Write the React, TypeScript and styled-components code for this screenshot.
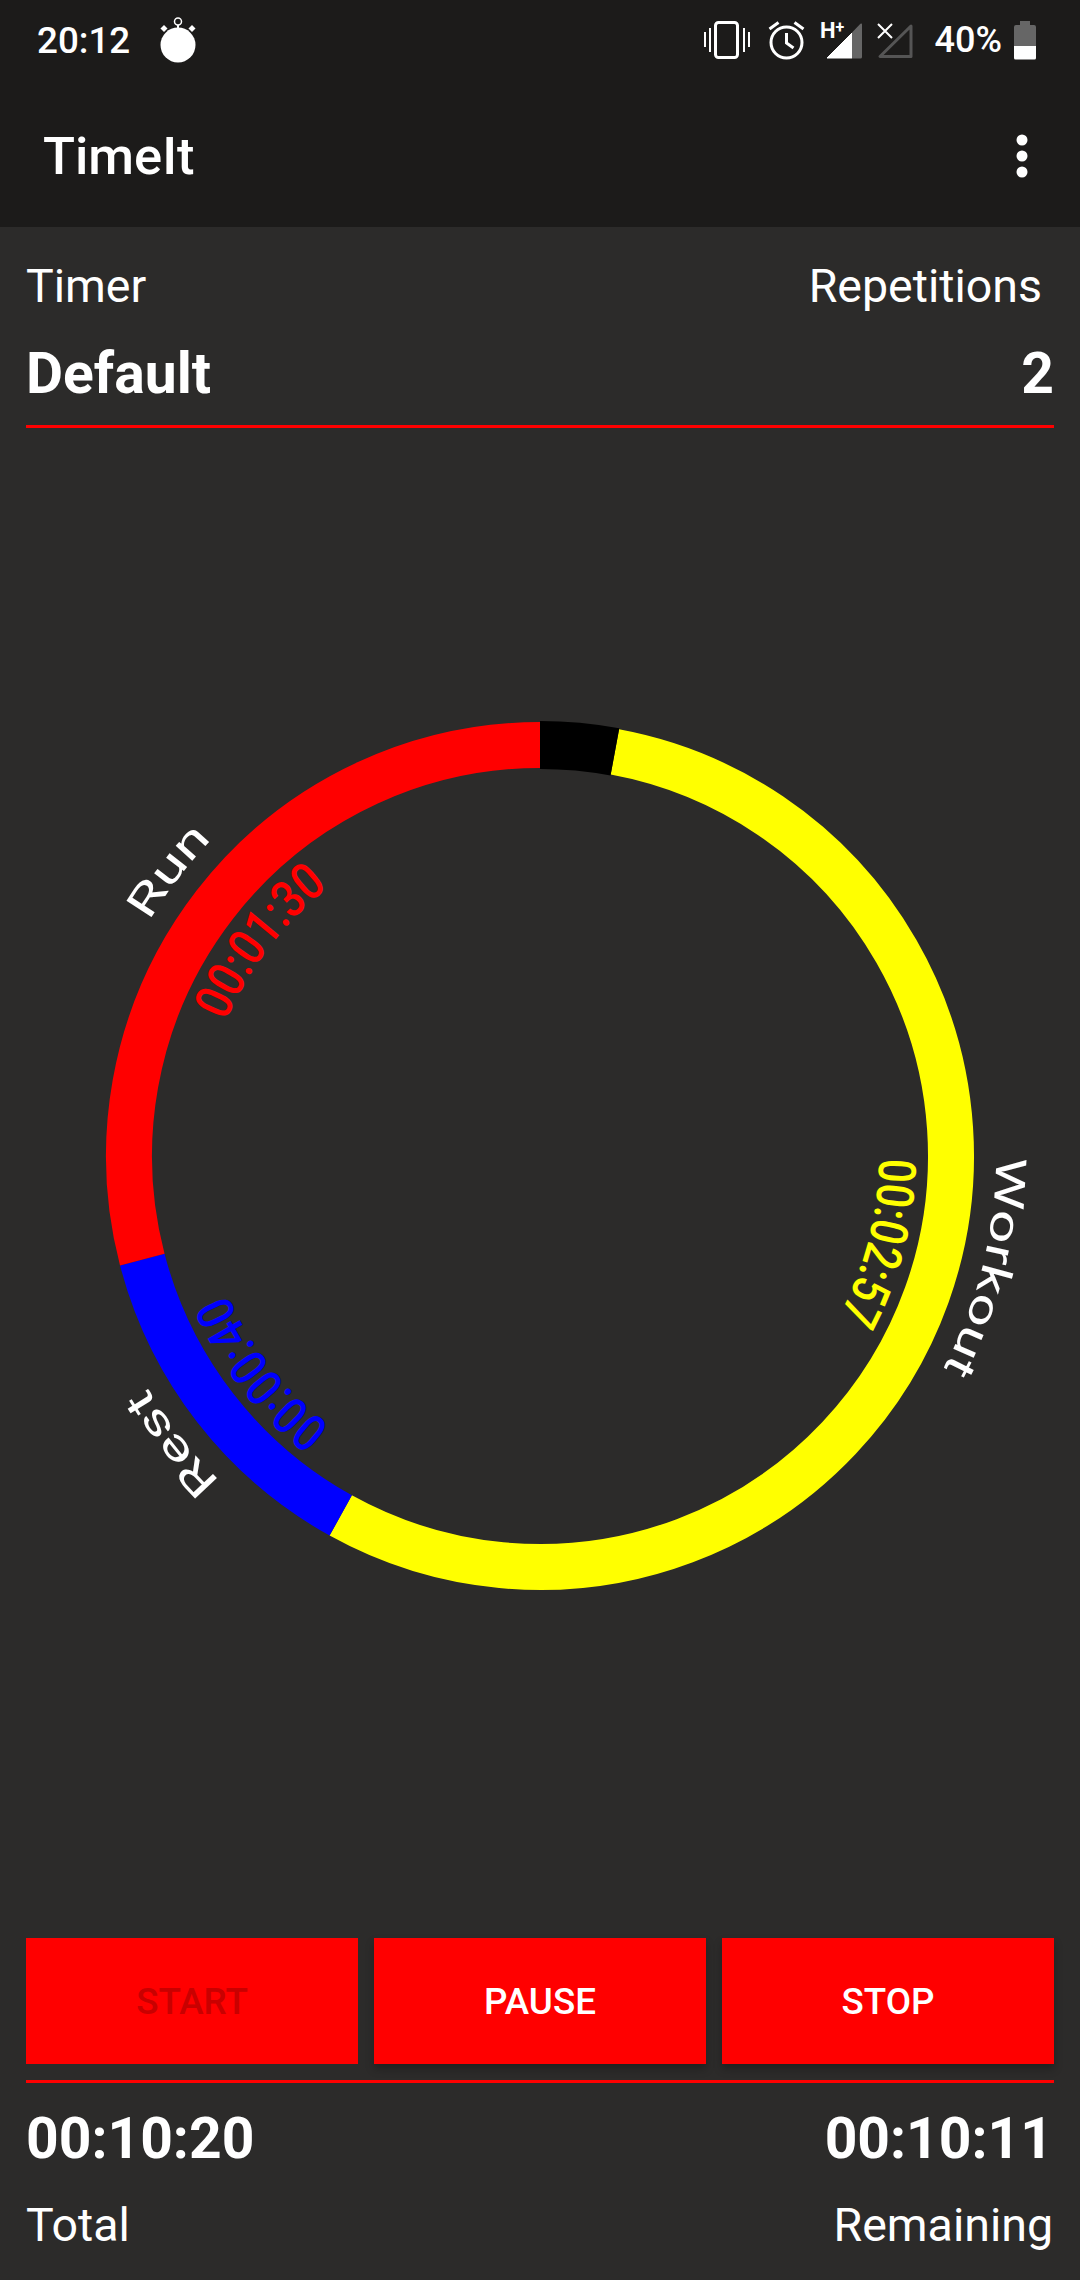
import React from 'react';
import styled, { createGlobalStyle } from 'styled-components';

const GlobalStyle = createGlobalStyle`
  html, body {
    margin: 0;
    padding: 0;
    background: #2c2b2a;
  }
  body {
    font-family: Roboto, "Noto Sans", sans-serif;
    color: #fff;
  }
`;

const Screen = styled.div`
  width: 1080px;
  height: 2280px;
  display: flex;
  flex-direction: column;
  background: #2c2b2a;
  overflow: hidden;
`;

const TopBars = styled.header`
  height: 227px;
  flex: none;
  display: flex;
  flex-direction: column;
  background: #1c1b1a;
`;

const StatusBar = styled.div`
  height: 80px;
  display: flex;
  align-items: center;
  padding: 0 44px 0 37px;
`;

const Clock = styled.span`
  font-size: 36.75px;
  font-weight: 500;
`;

const Stopwatch = styled.svg`
  margin-left: 30px;
`;

const StatusRight = styled.div`
  margin-left: auto;
  display: flex;
  align-items: center;
`;

const StatusIcon = styled.svg<{ $gap?: number }>`
  display: block;
  flex: none;
  margin-left: ${({ $gap }) => $gap ?? 0}px;
`;

const Percent = styled.span`
  font-size: 36px;
  font-weight: 500;
  margin: 0 12px 0 22px;
`;

const Toolbar = styled.div`
  flex: 1;
  display: flex;
  align-items: center;
  justify-content: space-between;
  padding: 4px 52px 0 43px;
`;

const Title = styled.h1`
  margin: 0;
  font-size: 52.5px;
  font-weight: 500;
`;

const Main = styled.main`
  flex: 1;
  display: flex;
  flex-direction: column;
  padding: 0 26px;
  min-height: 0;
`;

const LabelRow = styled.div`
  display: flex;
  justify-content: space-between;
  margin-top: 31px;
`;

const ValueRow = styled.div`
  display: flex;
  justify-content: space-between;
  margin: 26px 0 17px;
`;

const SmallLabel = styled.span<{ $inset?: number }>`
  font-size: 46.5px;
  line-height: 56px;
  padding-right: ${({ $inset }) => $inset ?? 0}px;
`;

const BigValue = styled.span<{ $inset?: number }>`
  font-size: 57px;
  line-height: 68px;
  font-weight: 700;
  padding-right: ${({ $inset }) => $inset ?? 0}px;
`;

const RedRule = styled.div<{ $gap?: number }>`
  height: 3px;
  background: #f00;
  flex: none;
  margin-top: ${({ $gap }) => $gap ?? 0}px;
`;

const RingArea = styled.div`
  flex: 1;
  min-height: 0;
  display: flex;
  align-items: center;
  justify-content: center;
  padding-bottom: 54px;
`;

const RingSvg = styled.svg`
  width: 1028px;
  height: 1028px;
  flex: none;
  font-family: Roboto, sans-serif;
`;

const Buttons = styled.div`
  display: grid;
  grid-template-columns: repeat(3, 1fr);
  gap: 16px;
`;

const ActionButton = styled.button<{ $disabled?: boolean }>`
  height: 126px;
  border: 0;
  padding: 0;
  background: #f00;
  color: ${({ $disabled }) => ($disabled ? '#c90000' : '#fff')};
  font-family: Roboto, sans-serif;
  font-size: 36.75px;
  font-weight: 500;
  box-shadow: ${({ $disabled }) => ($disabled ? 'none' : '0 5px 8px rgba(0, 0, 0, 0.25)')};
`;

const Totals = styled.div`
  display: flex;
  justify-content: space-between;
  height: 197px;
  flex: none;
`;

const TotalColumn = styled.div<{ $right?: boolean }>`
  display: flex;
  flex-direction: column;
  align-items: ${({ $right }) => ($right ? 'flex-end' : 'flex-start')};
  padding-top: 22px;
  gap: 24px;
`;

const CX = 514;
const CY = 514;
const MID_R = 411;

const polar = (r: number, deg: number) => {
  const a = ((deg - 90) * Math.PI) / 180;
  return [CX + r * Math.cos(a), CY + r * Math.sin(a)];
};

const arc = (r: number, from: number, to: number) => {
  const [x1, y1] = polar(r, from);
  const [x2, y2] = polar(r, to);
  const large = to - from > 180 ? 1 : 0;
  return `M${x1} ${y1}A${r} ${r} 0 ${large} 1 ${x2} ${y2}`;
};

const segments = [
  { from: 10.5, to: 209, color: '#ff0', width: 46 },
  { from: 209, to: 255.4, color: '#00f', width: 46 },
  { from: 255.4, to: 360, color: '#f00', width: 46 },
  { from: 0, to: 10.5, color: '#000', width: 48 }
];

const labels = [
  { id: 'workout', nameMid: 104, timeMid: 104.3, timeR: 339, name: 'Workout', time: '00:02:57', color: '#ff0', nameLen: 222, timeLen: 165 },
  { id: 'rest', nameMid: 232, timeMid: 232, timeR: 342, name: 'Rest', time: '00:00:40', color: '#00f', nameLen: 120, timeLen: 170 },
  { id: 'run', nameMid: 307.5, timeMid: 307.5, timeR: 342, name: 'Run', time: '00:01:30', color: '#f00', nameLen: 104, timeLen: 171 }
];

const Ring = () => (
  <RingSvg viewBox="0 0 1028 1028">
    <defs>
      {labels.map((l) => (
        <React.Fragment key={l.id}>
          <path id={`${l.id}-name`} d={arc(456, l.nameMid - 80, l.nameMid + 80)} />
          <path id={`${l.id}-time`} d={arc(l.timeR, l.timeMid - 80, l.timeMid + 80)} />
        </React.Fragment>
      ))}
    </defs>
    {segments.map((s) => (
      <path key={s.color} d={arc(MID_R, s.from, s.to)} fill="none" stroke={s.color} strokeWidth={s.width} />
    ))}
    {labels.map((l) => (
      <React.Fragment key={l.id}>
        <text fill="#fff" fontSize={42} textAnchor="middle">
          <textPath href={`#${l.id}-name`} startOffset="50%" textLength={l.nameLen} lengthAdjust="spacingAndGlyphs">
            {l.name}
          </textPath>
        </text>
        <text fill={l.color} fontSize={52} fontWeight={500} textAnchor="middle">
          <textPath href={`#${l.id}-time`} startOffset="50%" textLength={l.timeLen} lengthAdjust="spacingAndGlyphs">
            {l.time}
          </textPath>
        </text>
      </React.Fragment>
    ))}
  </RingSvg>
);

const App = () => (
  <>
    <GlobalStyle />
    <Screen>
      <TopBars>
        <StatusBar>
          <Clock>20:12</Clock>
          <Stopwatch width="36" height="46" viewBox="0 0 36 46" fill="#fff">
            <circle cx="18" cy="28" r="17.5" />
            <circle cx="18" cy="4.5" r="3.5" fill="none" stroke="#fff" strokeWidth="1.5" />
            <rect x="17" y="8" width="2" height="4" />
            <rect x="1.5" y="9" width="5" height="5" transform="rotate(45 4 11.5)" />
            <rect x="29.5" y="9" width="5" height="5" transform="rotate(45 32 11.5)" />
          </Stopwatch>
          <StatusRight>
            <StatusIcon width="46" height="40" viewBox="0 0 46 40" fill="none" stroke="#fff">
              <rect x="11.5" y="2.5" width="22" height="35" rx="3" strokeWidth="3" />
              <path d="M6 8v24M1 12v15M40 8v24M45 12v15" strokeWidth="2" />
            </StatusIcon>
            <StatusIcon $gap={18} width="37" height="40" viewBox="0 0 37 40" fill="none" stroke="#fff" strokeWidth="3">
              <circle cx="18.5" cy="22.5" r="15.5" />
              <path d="M18.5 13v10l7 5M1.5 9l9-6.500M35.500 9l-9-6.500" />
            </StatusIcon>
            <StatusIcon $gap={15} width="42" height="40" viewBox="0 0 42 40">
              <path d="M7 38h25V13z" fill="#fff" stroke="#fff" strokeWidth="1" strokeLinejoin="round" />
              <path d="M32 38.500h8.500a1.500 1.500 0 0 0 1.500-1.500V4.500a1 1 0 0 0-1.800-.6L32 12.500z" fill="#666" />
              <text x="0" y="18" fill="#fff" fontSize="22" fontWeight="700" fontFamily="Roboto">
                H<tspan fontSize="16" dy="-5">+</tspan>
              </text>
            </StatusIcon>
            <StatusIcon $gap={15} width="36" height="40" viewBox="0 0 36 40" fill="none">
              <path d="M3 36.500h31V6z" stroke="#555" strokeWidth="3" strokeLinejoin="round" />
              <path d="M1 4l14 14M15 4L1 18" stroke="#fff" strokeWidth="2" />
            </StatusIcon>
            <Percent>40%</Percent>
            <StatusIcon width="22" height="40" viewBox="0 0 22 40">
              <path d="M6 1h10v4h4a2 2 0 0 1 2 2v19H0V7a2 2 0 0 1 2-2h4z" fill="#666" />
              <path d="M0 26h22v12a1.500 1.500 0 0 1-1.500 1.500h-19A1.500 1.500 0 0 1 0 38z" fill="#fff" />
            </StatusIcon>
          </StatusRight>
        </StatusBar>
        <Toolbar>
          <Title>TimeIt</Title>
          <svg width="12" height="44" viewBox="0 0 12 44" fill="#fff">
            <circle cx="6" cy="6" r="5.5" />
            <circle cx="6" cy="22" r="5.5" />
            <circle cx="6" cy="38" r="5.5" />
          </svg>
        </Toolbar>
      </TopBars>
      <Main>
        <LabelRow>
          <SmallLabel>Timer</SmallLabel>
          <SmallLabel $inset={12}>Repetitions</SmallLabel>
        </LabelRow>
        <ValueRow>
          <BigValue>Default</BigValue>
          <BigValue>2</BigValue>
        </ValueRow>
        <RedRule />
        <RingArea>
          <Ring />
        </RingArea>
        <Buttons>
          <ActionButton $disabled>START</ActionButton>
          <ActionButton>PAUSE</ActionButton>
          <ActionButton>STOP</ActionButton>
        </Buttons>
        <RedRule $gap={16} />
        <Totals>
          <TotalColumn>
            <BigValue>00:10:20</BigValue>
            <SmallLabel>Total</SmallLabel>
          </TotalColumn>
          <TotalColumn $right>
            <BigValue $inset={1}>00:10:11</BigValue>
            <SmallLabel $inset={1}>Remaining</SmallLabel>
          </TotalColumn>
        </Totals>
      </Main>
    </Screen>
  </>
);

export default App;
